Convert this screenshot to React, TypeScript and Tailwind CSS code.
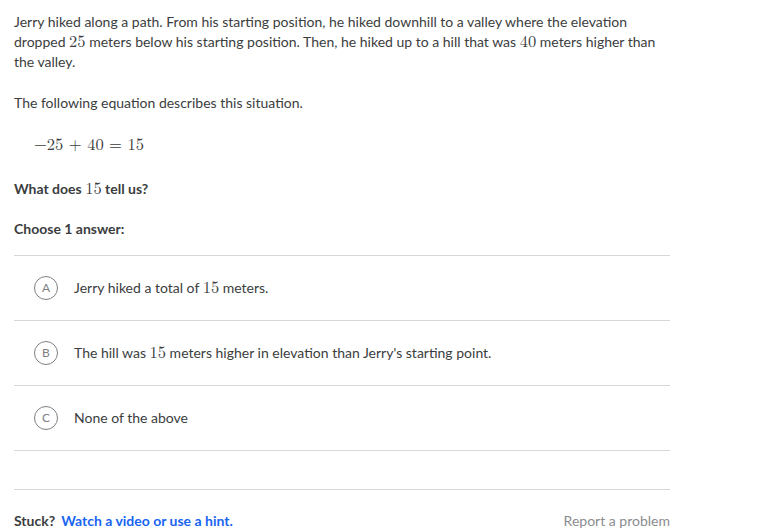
import React from 'react';

const M = ({ children }: { children: React.ReactNode }) => (
  <span className="text-[16.5px]" style={{ fontFamily: '"Latin Modern Math", "DejaVu Serif", "Liberation Serif", serif' }}>
    {children}
  </span>
);

const choices: { letter: string; content: React.ReactNode }[] = [
  { letter: 'A', content: <>Jerry hiked a total of <M>15</M> meters.</> },
  {
    letter: 'B',
    content: <>The hill was <M>15</M> meters higher in elevation than Jerry's starting point.</>,
  },
  { letter: 'C', content: <>None of the above</> },
];

export default function App() {
  return (
    <div
      className="w-[760px] h-[531px] overflow-hidden bg-white text-[#3b3d40] text-[14px] leading-[20px]"
      style={{ fontFamily: 'Lato, "Open Sans", sans-serif' }}
    >
      <div className="w-[656px] ml-[14px] pt-[12px]">
        <p>
          Jerry hiked along a path. From his starting position, he hiked downhill to a valley where the elevation
          dropped <M>25</M> meters below his starting position. Then, he hiked up to a hill that was <M>40</M> meters
          higher than the valley.
        </p>
        <p className="mt-[21px]">The following equation describes this situation.</p>
        <div className="mt-[22px] pl-[20px]">
          <M>−25 + 40 = 15</M>
        </div>
        <p className="mt-[24px] font-bold">
          What does <M><span className="font-normal">15</span></M> tell us?
        </p>
        <p className="mt-[20px] font-bold">Choose 1 answer:</p>

        <ul className="mt-[16px] border-b border-[#d6d8da]">
          {choices.map((c) => (
            <li key={c.letter} className="h-[65px] border-t border-[#d6d8da] flex items-center">
              <span className="ml-[20px] w-[24px] h-[24px] rounded-full border-[1.5px] border-[#7d7f83] flex items-center justify-center text-[12px] text-[#7d7f83]">
                {c.letter}
              </span>
              <span className="ml-[16px]">{c.content}</span>
            </li>
          ))}
        </ul>

        <div className="mt-[38px] border-t border-[#d6d8da] pt-[21px] flex justify-between">
          <div>
            <span className="font-bold">Stuck?</span>
            <a className="ml-[6px] font-bold text-[#1865f2]">Watch a video or use a hint.</a>
          </div>
          <span className="text-[#8a8c90]">Report a problem</span>
        </div>
      </div>
    </div>
  );
}
